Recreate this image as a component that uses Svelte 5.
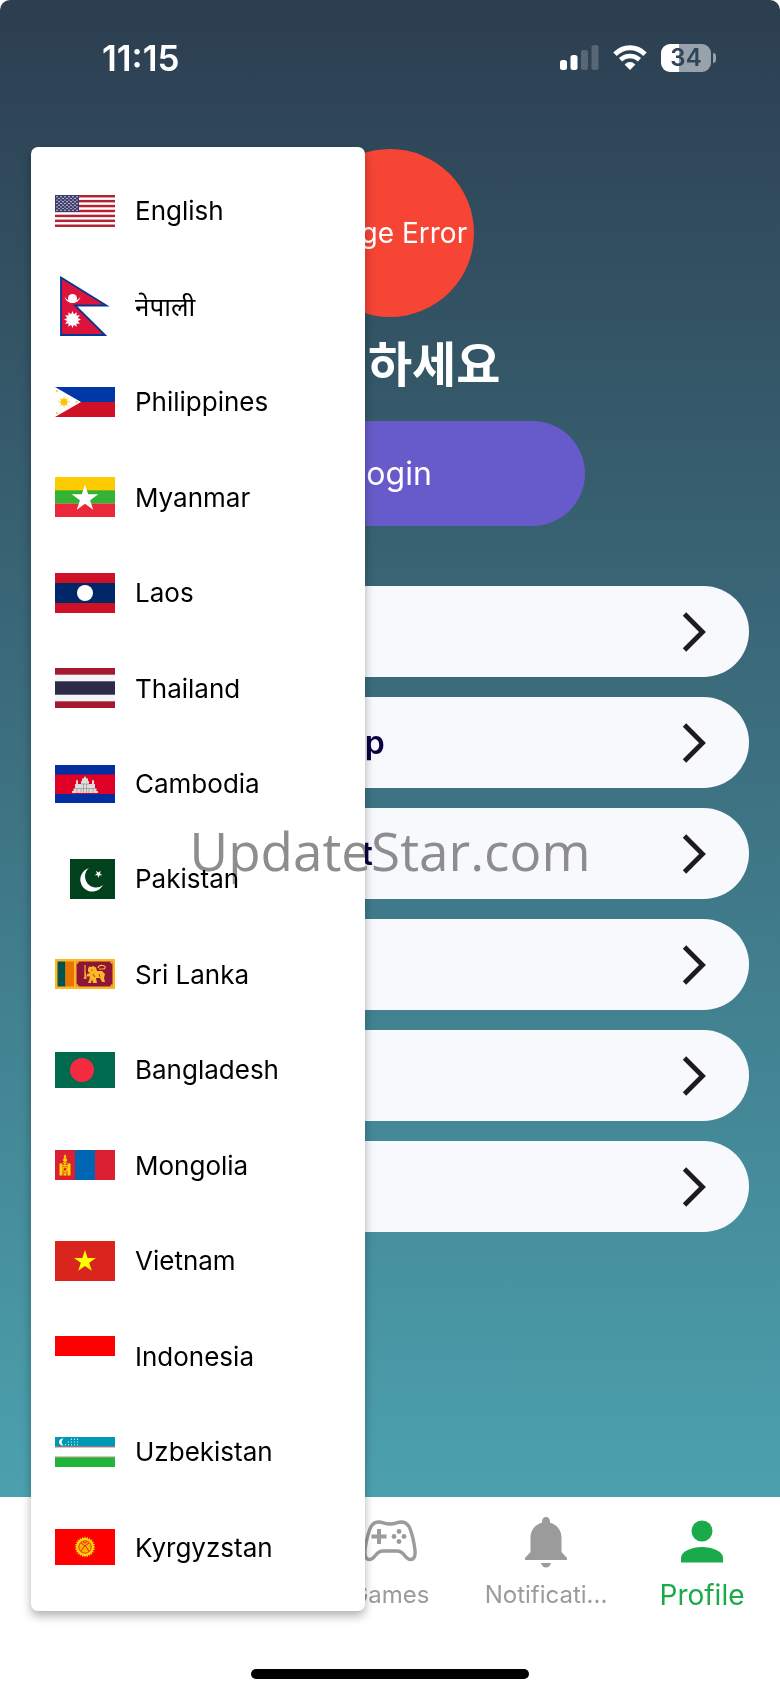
<script>
  const languages = [
    { code: 'us', name: 'English', w: 60, h: 32 },
    { code: 'np', name: 'नेपाली', w: 60, h: 60 },
    { code: 'ph', name: 'Philippines', w: 60, h: 30 },
    { code: 'mm', name: 'Myanmar', w: 60, h: 40 },
    { code: 'la', name: 'Laos', w: 60, h: 40 },
    { code: 'th', name: 'Thailand', w: 60, h: 40 },
    { code: 'kh', name: 'Cambodia', w: 60, h: 38 },
    { code: 'pk', name: 'Pakistan', w: 60, h: 40 },
    { code: 'lk', name: 'Sri Lanka', w: 60, h: 30 },
    { code: 'bd', name: 'Bangladesh', w: 60, h: 36 },
    { code: 'mn', name: 'Mongolia', w: 60, h: 30 },
    { code: 'vn', name: 'Vietnam', w: 60, h: 40 },
    { code: 'id', name: 'Indonesia', w: 60, h: 40 },
    { code: 'uz', name: 'Uzbekistan', w: 60, h: 30 },
    { code: 'kg', name: 'Kyrgyzstan', w: 60, h: 36 }
  ];

  const links = ['Notice', 'How to use App', 'Online Support', 'Terms', 'Privacy', 'Settings'];

  function star(cx, cy, outer, inner, points, turn = 0) {
    const out = [];
    for (let i = 0; i < points * 2; i++) {
      const r = i % 2 ? inner : outer;
      const a = -Math.PI / 2 + turn + (i * Math.PI) / points;
      out.push(`${(cx + r * Math.cos(a)).toFixed(2)},${(cy + r * Math.sin(a)).toFixed(2)}`);
    }
    return out.join(' ');
  }

  const range = (n) => Array.from({ length: n }, (_, i) => i);
</script>

<div class="page">
  <header class="status">
    <time>11:15</time>
    <div class="indicators">
      <svg width="39" height="26" viewBox="0 0 39 26" fill="#fff" aria-label="Signal">
        <rect x="0" y="15" width="7" height="10" rx="2.5" />
        <rect x="10.5" y="10" width="7" height="15" rx="2.5" />
        <rect x="21" y="5" width="7" height="20" rx="2.5" opacity=".2" />
        <rect x="31.5" y="0" width="7" height="25" rx="2.5" opacity=".2" />
      </svg>
      <svg width="34" height="26" viewBox="0 0 34 26" fill="none" stroke="#fff" aria-label="Wi-Fi">
        <path d="M2 9.3C10.5 .7 23.5 .7 32 9.3" stroke-width="5" />
        <path d="M7.5 14.8C13 9.8 21 9.8 26.5 14.8" stroke-width="4.6" />
        <path d="M17 25L11.6 19.4Q17 14.8 22.4 19.4Z" fill="#fff" stroke="none" />
      </svg>
      <div class="battery"><span>34</span></div>
    </div>
  </header>

  <main>
    <div class="avatar">Image Error</div>
    <h1>안녕하세요</h1>
    <button class="login">Login</button>
    <ul class="links">
      {#each links as label}
        <li>
          <a href="#top">
            <span>{label}</span>
            <svg width="24" height="40" viewBox="0 0 24 40" fill="none" stroke="#1d1b20" stroke-width="4.8" aria-hidden="true">
              <path d="M2.500 2L20.500 20L2.500 38" />
            </svg>
          </a>
        </li>
      {/each}
    </ul>
  </main>

  <nav>
    <a href="#home">
      <svg width="54" height="54" viewBox="0 0 24 24" fill="currentColor" aria-hidden="true"><path d="M10 20v-6h4v6h5v-8h3L12 3 2 12h3v8z" /></svg>
      <span>Home</span>
    </a>
    <a href="#shop">
      <svg width="54" height="54" viewBox="0 0 24 24" fill="currentColor" aria-hidden="true"><path d="M4 4h16v4H4zm1 6h14v10H5z" /></svg>
      <span>Shop</span>
    </a>
    <a href="#games">
      <svg width="54" height="54" viewBox="0 0 54 54" fill="none" stroke="currentColor" stroke-width="3.4" aria-hidden="true">
        <path d="M16 7C8 7 6.5 14 4 23.500C2 33 -.5 44.500 6.500 44.500C12.500 44.500 12 36 20 36H34C42 36 41.500 44.500 47.500 44.500C54.500 44.500 52 33 50 23.500C47.500 14 46 7 38 7C34 7 33 9 27 9C21 9 20 7 16 7Z" />
        <path d="M16 14V29M8.500 21.500H23.500" stroke-width="4" />
        <g fill="currentColor" stroke="none"><circle cx="36" cy="16.500" r="2.400" /><circle cx="36" cy="26.500" r="2.400" /><circle cx="31" cy="21.500" r="2.400" /><circle cx="41" cy="21.500" r="2.400" /></g>
      </svg>
      <span>Games</span>
    </a>
    <a href="#notifications">
      <svg width="54" height="54" viewBox="0 0 54 54" fill="currentColor" aria-hidden="true">
        <path d="M27 2C24.6 2 23 3.800 23 6.500V7.800C16 9.600 11.500 15.500 11.500 22.500V37L6 43V45H48V43L42.500 37V22.500C42.500 15.500 38 9.600 31 7.800V6.500C31 3.800 29.400 2 27 2Z" />
        <path d="M22 48H32Q30.500 52.500 27 52.500T22 48Z" />
      </svg>
      <span>Notificati...</span>
    </a>
    <a href="#profile" class="active" aria-current="page">
      <svg width="54" height="54" viewBox="0 0 54 54" fill="currentColor" aria-hidden="true">
        <circle cx="27" cy="16" r="10.500" />
        <path d="M6 47.500V43C6 36 17 32 27 32S48 36 48 43V47.500Z" />
      </svg>
      <span>Profile</span>
    </a>
  </nav>
  <div class="home-bar"></div>

  <ul class="menu">
    {#each languages as lang}
      <li>
        <button>
          <svg class="flag" width={lang.w} height={lang.h} viewBox="0 0 {lang.w} {lang.h}" aria-hidden="true">
            {#if lang.code === 'us'}
              <rect width="60" height="32" fill="#fff" />
              {#each range(7) as i}<rect y={i * 4.92} width="60" height="2.46" fill="#b22234" />{/each}
              <rect width="24" height="17" fill="#3c3b6e" />
              {#each range(9) as r}
                {#each range(r % 2 ? 5 : 6) as c}
                  <circle cx={(r % 2 ? 4 : 2) + c * 4} cy={1.7 + r * 1.7} r=".7" fill="#fff" />
                {/each}
              {/each}
            {:else if lang.code === 'np'}
              <path d="M6 1.5V59H50L20 29.5H51.5Z" fill="#dc143c" stroke="#003893" stroke-width="1.8" />
              <path d="M9.5 20.5Q11 27 17.5 27T25.5 20.5Q23 25 17.5 25T9.5 20.5Z" fill="#fff" />
              <circle cx="17.5" cy="22.5" r="4.5" fill="#fff" />
              <polygon points={star(17.5, 43.5, 8.5, 5.5, 12)} fill="#fff" />
            {:else if lang.code === 'ph'}
              <rect width="60" height="15" fill="#0038a8" />
              <rect y="15" width="60" height="15" fill="#ce1126" />
              <path d="M0 0L26 15L0 30Z" fill="#fff" />
              <polygon points={star(9, 15, 6.5, 2.5, 8)} fill="#fcd116" />
              <circle cx="9" cy="15" r="3.2" fill="#fcc30b" />
              <circle cx="2" cy="4" r="1.1" fill="#fcd116" /><circle cx="2" cy="26" r="1.1" fill="#fcd116" /><circle cx="21.5" cy="15" r="1.1" fill="#fcd116" />
            {:else if lang.code === 'mm'}
              <rect width="60" height="14" fill="#fecb00" />
              <rect y="13.3" width="60" height="13.4" fill="#34b233" />
              <rect y="26.6" width="60" height="13.4" fill="#ea2839" />
              <polygon points={star(30, 21.5, 14, 5.35, 5)} fill="#fff" />
            {:else if lang.code === 'la'}
              <rect width="60" height="40" fill="#ce1126" />
              <rect y="10" width="60" height="20" fill="#002868" />
              <circle cx="30" cy="20" r="8" fill="#fff" />
            {:else if lang.code === 'th'}
              <rect width="60" height="40" fill="#a51931" />
              <rect y="6.7" width="60" height="26.6" fill="#f4f5f8" />
              <rect y="13.3" width="60" height="13.4" fill="#2d2a4a" />
            {:else if lang.code === 'kh'}
              <rect width="60" height="38" fill="#032ea1" />
              <rect y="9.5" width="60" height="19.5" fill="#e00025" />
              <path d="M17 28V26H18.5V23.5H20V19H21V16L22 14.5L23 16V19H26V16H27V13.5H28.5L30 11L31.5 13.5H33V16H34V19H37V16L38 14.5L39 16V19H40V23.5H41.5V26H43V28Z" fill="#ddd" />
              <path d="M20 23.5H40M26 19H34M22 24V28M26 24V28M34 24V28M38 24V28M28.5 19V28M31.5 19V28" stroke="#888" stroke-width=".6" />
            {:else if lang.code === 'pk'}
              <rect x="15" width="45" height="40" fill="#01411c" />
              <path d="M34 9A12 12 0 1 0 48 26A11 11 0 1 1 34 9Z" fill="#fff" />
              <polygon points={star(43.5, 15, 4, 1.6, 5, 0.6)} fill="#fff" />
            {:else if lang.code === 'lk'}
              <rect width="60" height="30" fill="#fdb827" />
              <rect x="2.5" y="2.5" width="8" height="25" fill="#00534e" />
              <rect x="10.5" y="2.5" width="8.5" height="25" fill="#eb7400" />
              <rect x="21.5" y="2.5" width="36" height="25" fill="#8d153a" />
              <path d="M21.5 2.5h3l-3 3zM57.5 2.5h-3l3 3zM21.5 27.5h3l-3-3zM57.5 27.5h-3l3-3z" fill="#fdb827" />
              <path d="M33 10L34 7.5L36 8L38 7L41 8.5L42 12H47L50 15L49 19L50 23H47L45 19H41L42 24H38L37 20L36 24H33L34.500 20L35 17L32 17V15L35 14L33 12.500Z" fill="#fdb827" />
              <path d="M43 9Q44 5.5 48 6.500T49 10H44M30 6V20Q31 16 30 12M28.5 19H32M30 17H35" fill="none" stroke="#fdb827" stroke-width="1.2" />
              <path d="M36 11H37.500M38 15L40 18M44 15L45 18" stroke="#8d153a" stroke-width=".8" />
            {:else if lang.code === 'bd'}
              <rect width="60" height="36" fill="#006a4e" />
              <circle cx="27" cy="18" r="12" fill="#f42a41" />
            {:else if lang.code === 'mn'}
              <rect width="60" height="30" fill="#da2032" />
              <rect x="20" width="20" height="30" fill="#0066b3" />
              <g fill="#ffd900">
                <rect x="4.5" y="13.5" width="3" height="12" /><rect x="12.5" y="13.5" width="3" height="12" />
                <circle cx="10" cy="10" r="2" /><path d="M10 4L11.5 7L10 8.5L8.5 7ZM7.5 12.5H12.5L10 15ZM7.5 15H12.500V16.200H7.500ZM7.5 22.500H12.5V23.500H7.5ZM8 25.500L10 23L12 25.500Z" />
              </g>
              <circle cx="10" cy="19.2" r="2.2" fill="none" stroke="#ffd900" stroke-width="1.2" />
            {:else if lang.code === 'vn'}
              <rect width="60" height="40" fill="#da251d" />
              <polygon points={star(30, 20.5, 11.5, 4.4, 5)} fill="#ff0" />
            {:else if lang.code === 'id'}
              <rect width="60" height="20" fill="#f00" />
              <rect y="20" width="60" height="20" fill="#fff" />
            {:else if lang.code === 'uz'}
              <rect width="60" height="30" fill="#fff" />
              <rect width="60" height="9.7" fill="#0099b5" />
              <rect y="9.7" width="60" height=".6" fill="#ce1126" /><rect y="19.7" width="60" height=".6" fill="#ce1126" />
              <rect y="20.3" width="60" height="9.7" fill="#1eb53a" />
              <path d="M8.5 1.5A3.6 3.6 0 1 0 8.5 8.5A4.3 4.3 0 0 1 8.5 1.5Z" fill="#fff" />
              {#each range(3) as r}
                {#each range(3 + r) as c}<circle cx={22.5 - c * 3} cy={2.2 + r * 2.8} r=".6" fill="#fff" />{/each}
              {/each}
            {:else}
              <rect width="60" height="36" fill="#f00" />
              <polygon points={star(30, 18, 10.5, 8.5, 24)} fill="#ffd800" />
              <circle cx="30" cy="18" r="6.2" fill="#f8b500" stroke="#f22" stroke-width="1" />
              <path d="M26 14Q32 17 34 22.500M34 14Q28 17 26 22.500M28 13Q30 15 32 13" fill="none" stroke="#e22" stroke-width="1" />
            {/if}
          </svg>
          <span>{lang.name}</span>
        </button>
      </li>
    {/each}
  </ul>

  <div class="watermark">UpdateStar.com</div>
</div>

<style>
  :global(body) {
    margin: 0;
    background: #fff;
  }

  .page {
    position: relative;
    display: flex;
    flex-direction: column;
    min-height: 100vh;
    overflow: hidden;
    box-sizing: border-box;
    border-radius: 10px 10px 0 0;
    background: linear-gradient(#2c3e50, #4ca1af calc(100% - 198px));
    font-family: Inter, 'Noto Sans CJK KR', 'Noto Sans', sans-serif;
  }

  ul {
    list-style: none;
    margin: 0;
    padding: 0;
  }

  a {
    color: inherit;
    text-decoration: none;
  }

  button {
    border: 0;
    font: inherit;
    cursor: pointer;
  }

  .status {
    display: flex;
    justify-content: space-between;
    align-items: center;
    height: 116px;
    padding: 0 69px 0 102px;
    color: #fff;
  }

  time {
    font-size: 35px;
    font-weight: 600;
  }

  .indicators {
    display: flex;
    align-items: center;
    gap: 14px;
  }

  .battery {
    position: relative;
    width: 50px;
    height: 28px;
    border-radius: 9px;
    background: linear-gradient(90deg, #fff 36%, #97a2ac 36%);
    color: #2f4456;
    font-size: 24px;
    font-weight: 600;
    line-height: 28px;
    text-align: center;
  }

  .battery::after {
    content: '';
    position: absolute;
    left: 52px;
    top: 9px;
    width: 3px;
    height: 10px;
    border-radius: 0 3px 3px 0;
    background: #97a2ac;
  }

  main {
    flex: 1;
    display: flex;
    flex-direction: column;
    align-items: center;
    padding: 33px 31px 0;
  }

  .avatar {
    display: grid;
    place-items: center;
    width: 168px;
    height: 168px;
    border-radius: 50%;
    background: #f64435;
    color: #fff;
    font-size: 28px;
    white-space: nowrap;
  }

  h1 {
    margin: 14px 0 22px;
    color: #fff;
    font-size: 48px;
    font-weight: 700;
    line-height: 68px;
  }

  .login {
    width: 390px;
    height: 105px;
    border-radius: 53px;
    background: #675bcb;
    color: #fff;
    font-size: 32px;
  }

  .links {
    align-self: stretch;
    display: grid;
    gap: 20px;
    margin-top: 60px;
  }

  .links a {
    display: flex;
    justify-content: space-between;
    align-items: center;
    height: 91px;
    padding: 0 43px 0 110px;
    border-radius: 46px;
    background: #f7f9fd;
    color: #0b0040;
    font-size: 32px;
    font-weight: 600;
  }

  nav {
    display: grid;
    grid-template-columns: repeat(5, 1fr);
    height: 172px;
    background: #fff;
    color: #9b9b9b;
    font-size: 24px;
  }

  nav a {
    display: flex;
    flex-direction: column;
    align-items: center;
    gap: 10px;
    padding-top: 18px;
    line-height: 32px;
  }

  nav .active {
    color: #1baa49;
    font-size: 28px;
  }

  .home-bar {
    display: grid;
    justify-content: center;
    height: 26px;
    background: #fff;
  }

  .home-bar::before {
    content: '';
    width: 278px;
    height: 10px;
    border-radius: 5px;
    background: #000;
  }

  .menu {
    position: absolute;
    top: 147px;
    bottom: 84px;
    left: 31px;
    display: grid;
    grid-auto-rows: 1fr;
    width: 334px;
    padding: 16px 0;
    box-sizing: border-box;
    border-radius: 7px;
    background: #fff;
    box-shadow: 0 5px 10px rgb(0 0 0 / 30%);
  }

  .menu button {
    display: flex;
    align-items: center;
    gap: 20px;
    width: 100%;
    height: 100%;
    padding: 0 24px;
    background: none;
    color: #000;
    font-size: 26px;
    font-weight: 400;
  }

  .watermark {
    position: absolute;
    top: 816px;
    left: 0;
    right: 0;
    color: #8d8d8f;
    font-family: 'Open Sans', 'Noto Sans', sans-serif;
    font-size: 53px;
    line-height: 70px;
    text-align: center;
    mix-blend-mode: darken;
    pointer-events: none;
  }
</style>
